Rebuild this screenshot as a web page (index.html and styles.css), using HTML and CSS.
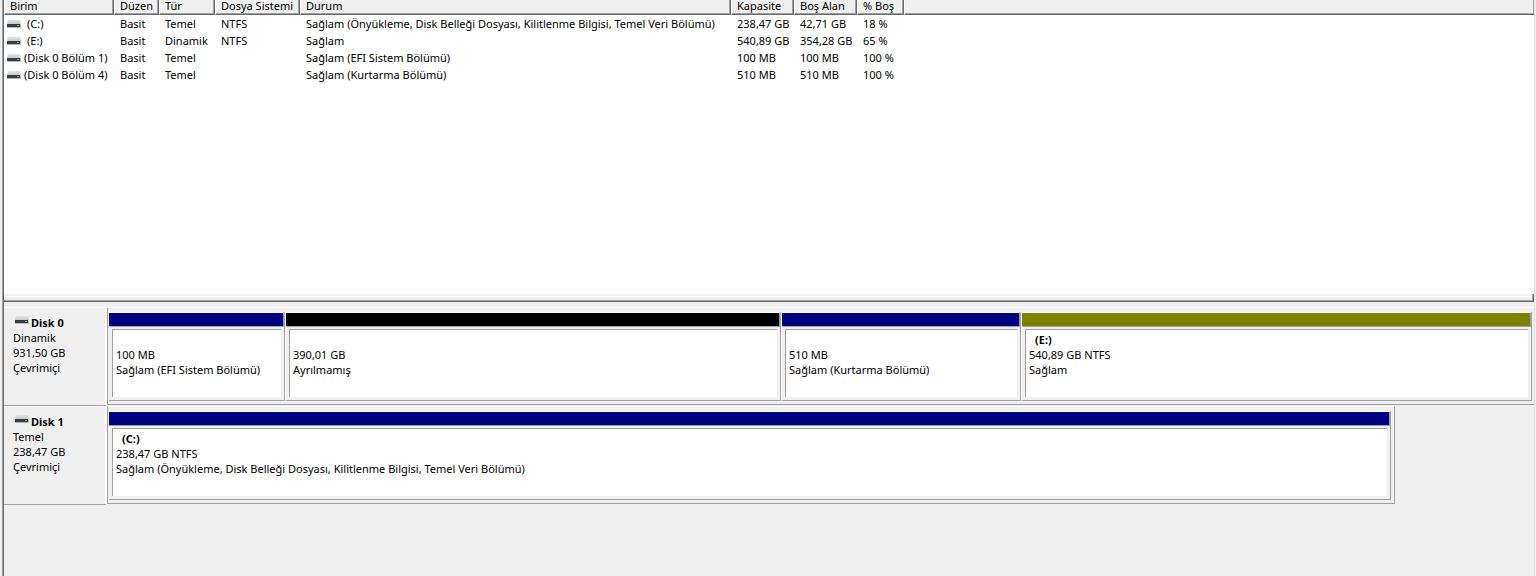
FILE: index.html
```
<!DOCTYPE html>
<html lang="tr">
<head>
    <meta charset="UTF-8">
    <meta name="viewport" content="width=device-width, initial-scale=1">
    <title>Disk Yönetimi</title>
    <link rel="stylesheet" href="styles.css">
</head>
<body>
<svg class="sprite" aria-hidden="true">
    <defs>
        <linearGradient id="drive-top" x1="0" y1="0" x2="0" y2="1">
            <stop offset="0" stop-color="#dfe2e6"/>
            <stop offset="1" stop-color="#c6c9ce"/>
        </linearGradient>
    </defs>
    <symbol id="icon-drive" viewBox="0 0 14 8">
        <path d="M1 0h12l1 4H0z" fill="url(#drive-top)"/>
        <path d="M0 4h14v4H0z" fill="#b4b6b9"/>
        <path d="M0 4h13v3H0z" fill="#3a3d40"/>
        <path d="M10 5h2v1h-2z" fill="#3fdc4a"/>
    </symbol>
</svg>
<main class="manager">
    <section class="volumes">
        <table class="volume-table">
            <colgroup>
                <col class="col-name">
                <col class="col-layout">
                <col class="col-type">
                <col class="col-fs">
                <col class="col-status">
                <col class="col-size">
                <col class="col-size">
                <col class="col-percent">
                <col>
            </colgroup>
            <thead>
            <tr>
                <th>Birim</th>
                <th>Düzen</th>
                <th>Tür</th>
                <th>Dosya Sistemi</th>
                <th>Durum</th>
                <th>Kapasite</th>
                <th>Boş Alan</th>
                <th>% Boş</th>
                <th></th>
            </tr>
            </thead>
            <tbody>
            <tr>
                <td class="volume-name"><svg class="icon"><use href="#icon-drive"></use></svg><span class="letter">(C:)</span></td>
                <td>Basit</td>
                <td>Temel</td>
                <td>NTFS</td>
                <td>Sağlam (Önyükleme, Disk Belleği Dosyası, Kilitlenme Bilgisi, Temel Veri Bölümü)</td>
                <td>238,47 GB</td>
                <td>42,71 GB</td>
                <td>18 %</td>
                <td></td>
            </tr>
            <tr>
                <td class="volume-name"><svg class="icon"><use href="#icon-drive"></use></svg><span class="letter">(E:)</span></td>
                <td>Basit</td>
                <td>Dinamik</td>
                <td>NTFS</td>
                <td>Sağlam</td>
                <td>540,89 GB</td>
                <td>354,28 GB</td>
                <td>65 %</td>
                <td></td>
            </tr>
            <tr>
                <td class="volume-name"><svg class="icon"><use href="#icon-drive"></use></svg><span>(Disk 0 Bölüm 1)</span></td>
                <td>Basit</td>
                <td>Temel</td>
                <td></td>
                <td>Sağlam (EFI Sistem Bölümü)</td>
                <td>100 MB</td>
                <td>100 MB</td>
                <td>100 %</td>
                <td></td>
            </tr>
            <tr>
                <td class="volume-name"><svg class="icon"><use href="#icon-drive"></use></svg><span>(Disk 0 Bölüm 4)</span></td>
                <td>Basit</td>
                <td>Temel</td>
                <td></td>
                <td>Sağlam (Kurtarma Bölümü)</td>
                <td>510 MB</td>
                <td>510 MB</td>
                <td>100 %</td>
                <td></td>
            </tr>
            </tbody>
        </table>
    </section>
    <div class="splitter"></div>
    <section class="disks">
        <article class="disk">
            <div class="disk-label">
                <h2><svg class="icon"><use href="#icon-drive"></use></svg>Disk 0</h2>
                <p>Dinamik</p>
                <p>931,50 GB</p>
                <p>Çevrimiçi</p>
            </div>
            <div class="partitions partitions-disk0">
                <div class="partition primary">
                    <div class="partition-body">
                        <p></p>
                        <p>100 MB</p>
                        <p>Sağlam (EFI Sistem Bölümü)</p>
                    </div>
                </div>
                <div class="partition unallocated">
                    <div class="partition-body">
                        <p></p>
                        <p>390,01 GB</p>
                        <p>Ayrılmamış</p>
                    </div>
                </div>
                <div class="partition primary">
                    <div class="partition-body">
                        <p></p>
                        <p>510 MB</p>
                        <p>Sağlam (Kurtarma Bölümü)</p>
                    </div>
                </div>
                <div class="partition simple">
                    <div class="partition-body">
                        <h3>(E:)</h3>
                        <p>540,89 GB NTFS</p>
                        <p>Sağlam</p>
                    </div>
                </div>
            </div>
        </article>
        <article class="disk">
            <div class="disk-label">
                <h2><svg class="icon"><use href="#icon-drive"></use></svg>Disk 1</h2>
                <p>Temel</p>
                <p>238,47 GB</p>
                <p>Çevrimiçi</p>
            </div>
            <div class="partitions partitions-disk1">
                <div class="partition primary">
                    <div class="partition-body">
                        <h3>(C:)</h3>
                        <p>238,47 GB NTFS</p>
                        <p>Sağlam (Önyükleme, Disk Belleği Dosyası, Kilitlenme Bilgisi, Temel Veri Bölümü)</p>
                    </div>
                </div>
            </div>
        </article>
    </section>
</main>
</body>
</html>
```
FILE: styles.css
```
*, *::before {
    box-sizing: border-box;
}

body {
    margin: 0;
    background: #f0f0f0;
    color: #000;
    font-family: "Noto Sans", "Open Sans", sans-serif;
    font-size: 11px;
    line-height: 15px;
}

h2, h3, p {
    margin: 0;
    font-size: 11px;
    min-height: 15px;
}

.sprite {
    position: absolute;
    width: 0;
    height: 0;
}

.icon {
    flex: none;
    width: 14px;
    height: 8px;
}

.manager {
    display: flex;
    flex-direction: column;
    min-height: 100vh;
    margin: 0 1px 0 2px;
    border-left: 1px solid #a0a0a0;
    border-right: 1px solid #e3e3e3;
    box-shadow: inset 1px 0 #696969;
    padding-left: 1px;
}

/* volume list */
.volumes {
    height: 294px;
    background: #fff;
}

.volume-table {
    width: 100%;
    table-layout: fixed;
    border-collapse: separate;
    border-spacing: 0;
}

.col-name { width: 110px; }
.col-layout { width: 45px; }
.col-type { width: 56px; }
.col-fs { width: 85px; }
.col-status { width: 431px; }
.col-size { width: 63px; }
.col-percent { width: 47px; }

.volume-table th,
.volume-table td {
    padding: 0 0 0 6px;
    text-align: left;
    font-weight: normal;
    white-space: nowrap;
}

.volume-table th {
    height: 15px;
    padding-left: 5px;
    background: #f0f0f0;
    border-left: 1px solid #fff;
    border-right: 1px solid #696969;
    border-bottom: 1px solid #696969;
    box-shadow: inset -1px -1px #a0a0a0;
    line-height: 12px;
    vertical-align: top;
}

.volume-table th:last-child {
    border-right: 0;
}

.volume-table td {
    height: 17px;
    line-height: 17px;
}

.volume-table .volume-name {
    display: flex;
    align-items: center;
    gap: 3px;
    padding-left: 3px;
}

.letter {
    padding-left: 3px;
}

.splitter {
    height: 8px;
    background: #f0f0f0;
    border-right: 1px solid #696969;
    border-bottom: 1px solid #696969;
    box-shadow: inset -1px -1px #a0a0a0, inset 0 2px #f0f0f0, inset 0 3px #fff;
}

/* graphical view */
.disks {
    padding-top: 5px;
}

.disk {
    display: flex;
    height: 99px;
}

.disk-label {
    flex: none;
    width: 103px;
    padding: 7px 0 0 9px;
    border-top: 1px solid #fff;
    border-right: 2px solid #fff;
    border-bottom: 1px solid #a0a0a0;
}

.disk-label h2 {
    display: flex;
    gap: 2px;
    padding-left: 2px;
}

.disk-label .icon {
    margin-top: 1px;
}

.partitions {
    display: grid;
    height: 98px;
    padding: 4px 2px 3px 1px;
    border: 1px solid #a0a0a0;
    border-top-color: #fff;
}

.partitions-disk0 {
    flex: 1;
    grid-template-columns: 177fr 496fr 240fr 510fr;
    border-right: 0;
}

.partitions-disk1 {
    flex: 1;
    margin-right: 139px;
    padding-right: 3px;
}

.partition {
    display: flex;
    flex-direction: column;
    min-width: 0;
    border-right: 1px solid #fff;
    border-bottom: 1px solid #a0a0a0;
    box-shadow: inset -1px 0 #a0a0a0;
}

.partition:last-child {
    border-right: 0;
}

.partition::before {
    content: "";
    height: 15px;
    background: #000080;
    border-top: 1px solid #fff;
    border-right: 2px solid #a0a0a0;
    border-bottom: 1px solid #a0a0a0;
}

.unallocated::before {
    background: #000;
}

.simple::before {
    background: #808000;
}

.partition-body {
    flex: 1;
    margin: 2px 4px 3px 3px;
    padding: 2px 0 0 3px;
    background: #fff;
    border-top: 1px solid #a0a0a0;
    border-left: 1px solid #a0a0a0;
    white-space: nowrap;
    overflow: hidden;
}

.partition-body h3 {
    padding-left: 6px;
}
```
